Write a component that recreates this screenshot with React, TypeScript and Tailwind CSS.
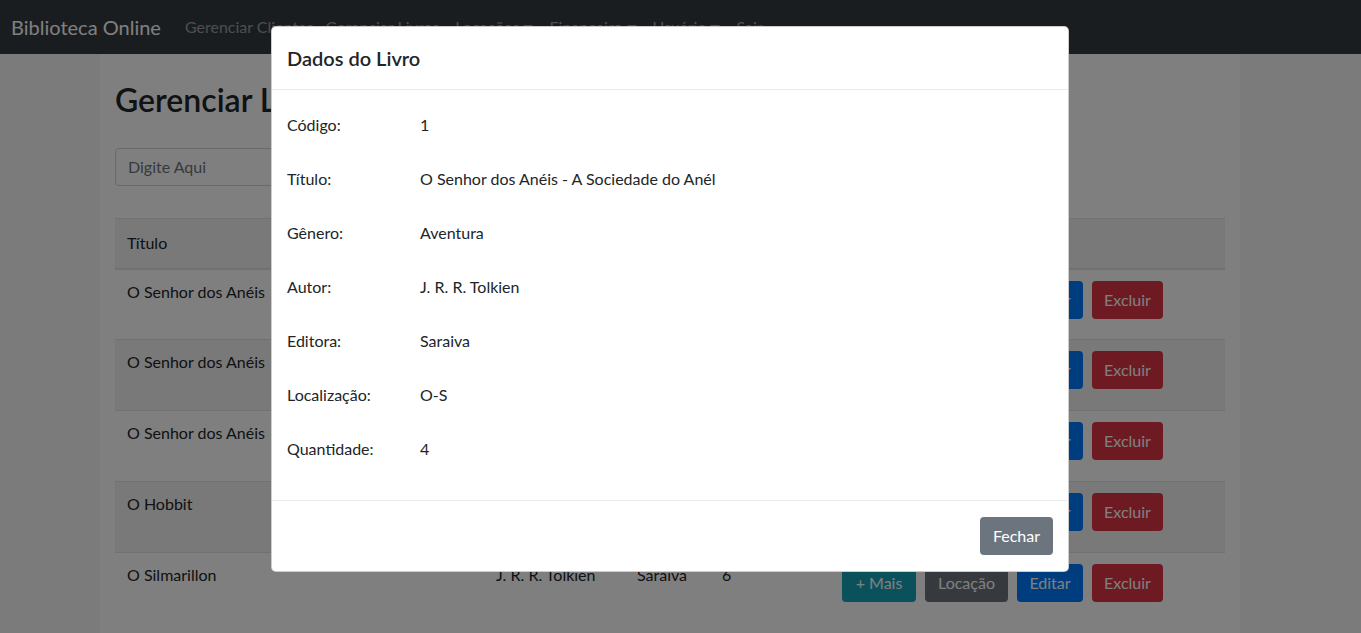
import React from "react";

const font = { fontFamily: "Lato, 'Noto Sans', sans-serif" };

function Caret() {
  return (
    <span className="ml-[4px] inline-block h-0 w-0 border-x-[5px] border-t-[6px] border-x-transparent border-t-current align-[2px]" />
  );
}

const rows = [
  { t: "O Senhor dos Anéis", a: "", e: "", q: "", striped: false },
  { t: "O Senhor dos Anéis", a: "", e: "", q: "", striped: true },
  { t: "O Senhor dos Anéis", a: "", e: "", q: "", striped: false },
  { t: "O Hobbit", a: "", e: "", q: "", striped: true },
  { t: "O Silmarillon", a: "J. R. R. Tolkien", e: "Saraiva", q: "6", striped: false },
];

const fields: [string, string][] = [
  ["Código:", "1"],
  ["Título:", "O Senhor dos Anéis - A Sociedade do Anél"],
  ["Gênero:", "Aventura"],
  ["Autor:", "J. R. R. Tolkien"],
  ["Editora:", "Saraiva"],
  ["Localização:", "O-S"],
  ["Quantidade:", "4"],
];

export default function App() {
  return (
    <div className="relative h-[633px] w-[1361px] overflow-hidden bg-[#f6f6f6] text-[#212529]" style={font}>
      {/* Navbar */}
      <nav className="flex h-[54px] items-center bg-[#343a40] pl-[11px]">
        <span className="mr-[20px] text-[20px] text-white">Biblioteca Online</span>
        <div className="flex items-center text-[16px] text-white/50">
          <span className="px-[4px]">Gerenciar Clientes</span>
          <span className="px-[8px]">Gerenciar Livros</span>
          <span className="px-[8px]">Locações<Caret /></span>
          <span className="px-[8px]">Financeiro<Caret /></span>
          <span className="px-[8px]">Usuário<Caret /></span>
          <span className="px-[8px]">Sair</span>
        </div>
      </nav>

      {/* Container */}
      <div className="ml-[100px] h-[579px] w-[1140px] bg-white px-[15px]">
        <h1 className="pt-[27px] text-[32px] font-semibold leading-[1.2]">Gerenciar Livros</h1>
        <div className="mt-[29px] flex h-[38px] w-[500px] items-center rounded-[4px] border border-[#ced4da] px-[12px] text-[16px] text-[#6c757d]">
          Digite Aqui
        </div>
        <table className="mt-[32px] w-[1110px] table-fixed border-collapse text-[16px]">
          <colgroup>
            <col className="w-[369px]" />
            <col className="w-[141px]" />
            <col className="w-[85px]" />
            <col className="w-[120px]" />
            <col />
          </colgroup>
          <thead>
            <tr className="h-[50px] border-t border-b-2 border-[#dee2e6] bg-[#f2f2f2] text-left">
              <th className="px-[12px] pb-[1px] font-normal">Título</th>
              <th className="px-[12px] pb-[1px] font-normal">Autor</th>
              <th className="px-[12px] pb-[1px] font-normal">Editora</th>
              <th className="px-[12px] pb-[1px] font-normal">Qtd</th>
              <th className="px-[12px] pb-[1px] font-normal">Ações</th>
            </tr>
          </thead>
          <tbody>
            {rows.map((r, i) => (
              <tr key={i} className={`h-[71px] border-t border-[#dee2e6] align-top ${r.striped ? "bg-[#f2f2f2]" : ""}`}>
                <td className="px-[12px] pt-[10px]">{r.t}</td>
                <td className="px-[12px] pt-[10px]">{r.a}</td>
                <td className="px-[12px] pt-[10px]">{r.e}</td>
                <td className="px-[12px] pt-[10px]">{r.q}</td>
                <td className="px-[12px] pt-[11px]">
                  <div className="flex gap-[9px] text-white">
                    <span className="flex h-[38px] w-[74px] items-center justify-center rounded-[4px] bg-[#17a2b8]">+ Mais</span>
                    <span className="flex h-[38px] w-[83px] items-center justify-center rounded-[4px] bg-[#6c757d]">Locação</span>
                    <span className="flex h-[38px] w-[66px] items-center justify-center rounded-[4px] bg-[#007bff]">Editar</span>
                    <span className="flex h-[38px] w-[71px] items-center justify-center rounded-[4px] bg-[#dc3545]">Excluir</span>
                  </div>
                </td>
              </tr>
            ))}
          </tbody>
        </table>
      </div>

      {/* Backdrop */}
      <div className="absolute inset-0 bg-black/50" />

      {/* Modal */}
      <div className="absolute left-[271px] top-[26px] w-[798px] rounded-[5px] border border-black/20 bg-white">
        <div className="border-b border-[#e9ecef] px-[15px] py-[16px]">
          <h5 className="text-[20px] font-semibold leading-[30px]">Dados do Livro</h5>
        </div>
        <div className="px-[15px] py-[16px]">
          {fields.map(([l, v]) => (
            <div key={l} className="flex h-[54px] pt-[7px] text-[16px] leading-[24px]">
              <span className="w-[133px]">{l}</span>
              <span>{v}</span>
            </div>
          ))}
        </div>
        <div className="flex justify-end border-t border-[#e9ecef] py-[16px] pr-[15px]">
          <span className="flex h-[38px] w-[73px] items-center justify-center rounded-[4px] bg-[#6c757d] text-[16px] text-white">Fechar</span>
        </div>
      </div>
    </div>
  );
}
